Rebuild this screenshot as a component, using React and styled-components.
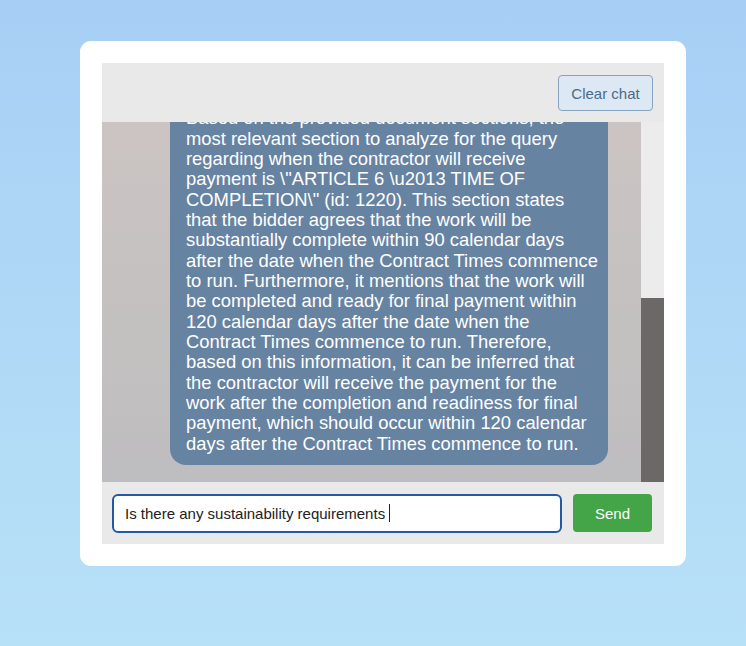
import React from "react";
import styled, { createGlobalStyle } from "styled-components";

const Global = createGlobalStyle`
  html, body { margin: 0; padding: 0; }
  body {
    min-height: 646px;
    background: linear-gradient(180deg, #a7cff5 0%, #b7e1f7 100%);
    font-family: "Liberation Sans", Arial, sans-serif;
  }
`;

const Page = styled.div`
  padding: 41px 60px 0 80px;
  height: 646px;
  box-sizing: border-box;
`;

const Card = styled.div`
  width: 606px;
  height: 525px;
  box-sizing: border-box;
  background: #ffffff;
  border-radius: 11px;
  padding: 22px;
`;

const Chat = styled.div`
  display: flex;
  flex-direction: column;
  height: 481px;
  background: #e9e9e9;
`;

const Header = styled.div`
  height: 59px;
  flex: none;
  display: flex;
  justify-content: flex-end;
  align-items: flex-start;
  padding: 12px 11px 0 0;
  box-sizing: border-box;
`;

const ClearButton = styled.button`
  width: 95px;
  height: 36px;
  background: #dce9f4;
  border: 1px solid #86a3bf;
  border-radius: 4px;
  color: #4b6b8a;
  font-family: "Liberation Sans", Arial, sans-serif;
  font-size: 15px;
  padding: 0;
  cursor: pointer;
`;

const Body = styled.div`
  flex: 1;
  display: flex;
  min-height: 0;
`;

const Messages = styled.div`
  flex: 1;
  display: flex;
  flex-direction: column;
  justify-content: flex-end;
  overflow: hidden;
  background: linear-gradient(180deg, #cbc4c3 0%, #c3c0c0 60%, #bebdbf 100%);
  padding: 0 33px 17px 68px;
`;

const Bubble = styled.div`
  flex: none;
  background: #6783a2;
  color: #ffffff;
  border-radius: 16px;
  padding: 10px 10px 11px 16px;
  font-family: "Liberation Sans", Arial, sans-serif;
  font-size: 18.4px;
  line-height: 20.33px;
`;

const Scrollbar = styled.div`
  width: 23px;
  display: flex;
  flex-direction: column;
  background: #ececec;
`;

const Thumb = styled.div`
  margin-top: auto;
  height: 184px;
  background: #6c6868;
`;

const InputRow = styled.div`
  height: 62px;
  flex: none;
  display: flex;
  align-items: center;
  gap: 11px;
  padding: 0 12px 0 10px;
  box-sizing: border-box;
`;

const Field = styled.div`
  flex: 1;
  height: 39px;
  box-sizing: border-box;
  border: 2px solid #2358a3;
  border-radius: 6px;
  background: #ffffff;
  display: flex;
  align-items: center;
  padding: 0 11px;
  font-size: 15px;
  color: #222222;
`;

const Caret = styled.span`
  display: inline-block;
  width: 1px;
  height: 18px;
  background: #222;
  margin-left: 4px;
`;

const SendButton = styled.button`
  width: 79px;
  height: 38px;
  background: #43a548;
  border: none;
  border-radius: 4px;
  color: #ffffff;
  font-family: "Liberation Sans", Arial, sans-serif;
  font-size: 15px;
  padding: 0;
  cursor: pointer;
`;

const message =
  'Based on the provided document sections, the most relevant section to analyze for the query regarding when the contractor will receive payment is \\"ARTICLE 6 \\u2013 TIME OF COMPLETION\\" (id: 1220). This section states that the bidder agrees that the work will be substantially complete within 90 calendar days after the date when the Contract Times commence to run. Furthermore, it mentions that the work will be completed and ready for final payment within 120 calendar days after the date when the Contract Times commence to run. Therefore, based on this information, it can be inferred that the contractor will receive the payment for the work after the completion and readiness for final payment, which should occur within 120 calendar days after the Contract Times commence to run.';

export default function App() {
  return (
    <>
      <Global />
      <Page>
        <Card>
          <Chat>
            <Header>
              <ClearButton>Clear chat</ClearButton>
            </Header>
            <Body>
              <Messages>
                <Bubble>{message}</Bubble>
              </Messages>
              <Scrollbar>
                <Thumb />
              </Scrollbar>
            </Body>
            <InputRow>
              <Field>
                <span>Is there any sustainability requirements</span>
                <Caret />
              </Field>
              <SendButton>Send</SendButton>
            </InputRow>
          </Chat>
        </Card>
      </Page>
    </>
  );
}
